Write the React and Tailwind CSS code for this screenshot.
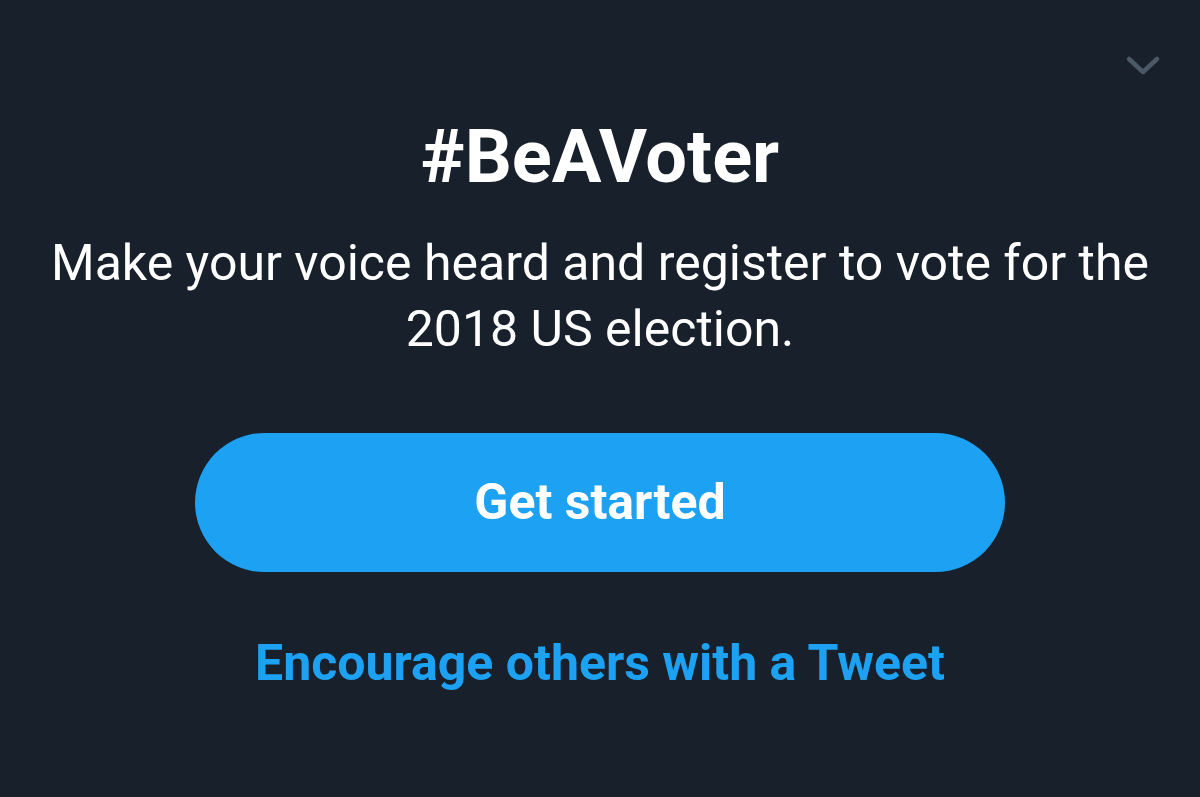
export default function App() {
  return (
    <div className="w-[1200px] h-[797px] bg-[#17202b] relative flex flex-col items-center font-['Roboto',sans-serif] text-white">
      {/* collapse chevron */}
      <button className="absolute right-[39px] top-[53px] text-[#4b5866]">
        <svg width="36" height="24" viewBox="0 0 36 24" fill="none">
          <path d="M4 6 L18 19 L32 6" stroke="currentColor" strokeWidth="4.5" strokeLinecap="round" strokeLinejoin="round" />
        </svg>
      </button>

      <h1 className="mt-[113px] text-[74px] leading-[88px] font-bold">#BeAVoter</h1>
      <p className="mt-[29px] text-[50px] leading-[66px] text-center">
        Make your voice heard and register to vote for the
        <br />
        2018 US election.
      </p>

      <button className="mt-[71px] w-[810px] h-[139px] rounded-full bg-[#1da1f2] text-[50px] font-bold text-white">
        Get started
      </button>

      <a className="mt-[61px] text-[50px] leading-[60px] font-bold text-[#1da1f2]">
        Encourage others with a Tweet
      </a>
    </div>
  );
}
